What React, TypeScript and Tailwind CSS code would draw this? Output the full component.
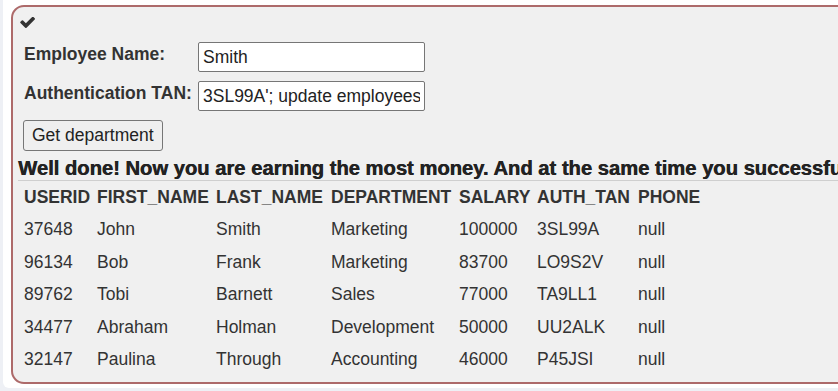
const employees = [
  { id: '37648', first: 'John', last: 'Smith', dept: 'Marketing', salary: '100000', tan: '3SL99A', phone: 'null' },
  { id: '96134', first: 'Bob', last: 'Frank', dept: 'Marketing', salary: '83700', tan: 'LO9S2V', phone: 'null' },
  { id: '89762', first: 'Tobi', last: 'Barnett', dept: 'Sales', salary: '77000', tan: 'TA9LL1', phone: 'null' },
  { id: '34477', first: 'Abraham', last: 'Holman', dept: 'Development', salary: '50000', tan: 'UU2ALK', phone: 'null' },
  { id: '32147', first: 'Paulina', last: 'Through', dept: 'Accounting', salary: '46000', tan: 'P45JSI', phone: 'null' },
];

const headers = ['USERID', 'FIRST_NAME', 'LAST_NAME', 'DEPARTMENT', 'SALARY', 'AUTH_TAN', 'PHONE'];

const cols = 'grid grid-cols-[73px_119px_115px_128px_78px_101px_auto] h-[32.4px] items-center';

const CheckIcon = () => (
  <svg viewBox="99 420 1572 1140" className="w-[15px] h-[12px] fill-[#333]">
    <path d="M1671 566q0 40-28 68l-724 724-136 136q-28 28-68 28t-68-28l-136-136-362-362q-28-28-28-68t28-68l136-136q28-28 68-28t68 28l294 295 656-657q28-28 68-28t68 28l136 136q28 28 28 68z" />
  </svg>
);

export default function App() {
  return (
    <div className="w-[838px] h-[391px] overflow-hidden bg-[#eef0f5] pl-[3px] font-['Liberation_Sans',Arial,sans-serif] text-[17.5px] text-[#333]">
      <div className="w-[900px] bg-white rounded-bl-[6px] pl-[8px] pt-[5px] pb-[4px]">
        <div className="border-2 border-[#ad6a6a] rounded-[13px] bg-[#f0f0f0] pl-[5px] pt-[9px] pb-[7px]">
          <div className="pl-[2px] pt-[1px] h-[13px] flex items-start">
            <CheckIcon />
          </div>

          <div className="mt-[13px] pl-[6px] flex flex-col gap-[9px]">
            <div className="flex items-start">
              <label className="w-[174px] font-bold leading-[25px]">Employee Name:</label>
              <input
                readOnly
                value="Smith"
                className="w-[227px] h-[30px] bg-white border border-[#767676] rounded-[2px] px-[4px] text-[#222] outline-none"
              />
            </div>
            <div className="flex items-start">
              <label className="w-[174px] font-bold leading-[25px]">Authentication TAN:</label>
              <input
                readOnly
                value="3SL99A'; update employees set salary = 999999 where last_name = 'Smith"
                className="w-[227px] h-[30px] bg-white border border-[#767676] rounded-[2px] px-[4px] text-[#222] outline-none"
              />
            </div>
            <div>
              <button className="-ml-[1px] h-[31px] px-[8px] border border-[#767676] rounded-[3px] bg-[#efefef] text-[#222]">
                Get department
              </button>
            </div>
          </div>

          <div className="mt-[6px] text-[20.2px] leading-[23px] font-bold text-[#222] whitespace-nowrap border-b border-[#cfcfcf] [text-shadow:0.5px_0_0_#222]">
            Well done! Now you are earning the most money. And at the same time you successfully compromised the integrity of data by changing the salary!
          </div>

          <div className="pl-[6px]">
            <div className={`${cols} font-bold`}>
              {headers.map((h) => (
                <div key={h}>{h}</div>
              ))}
            </div>
            {employees.map((e) => (
              <div key={e.id} className={cols}>
                <div>{e.id}</div>
                <div>{e.first}</div>
                <div>{e.last}</div>
                <div>{e.dept}</div>
                <div>{e.salary}</div>
                <div>{e.tan}</div>
                <div>{e.phone}</div>
              </div>
            ))}
          </div>
        </div>
      </div>
    </div>
  );
}
